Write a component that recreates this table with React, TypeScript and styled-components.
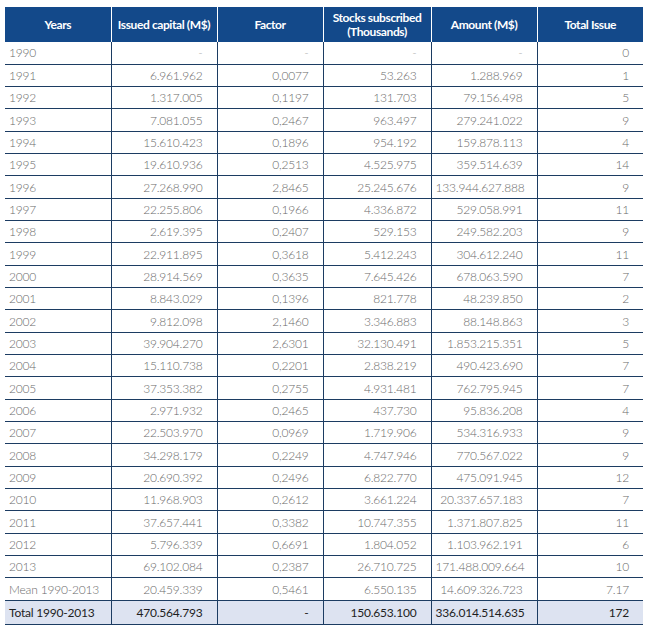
import React from 'react'
import styled, { createGlobalStyle } from 'styled-components'

const GlobalStyle = createGlobalStyle`
  body {
    margin: 0;
    background: #fff;
    font-family: Lato, "Open Sans", sans-serif;
  }
`

type Row = [string, string, string, string, string, string]

const rows: Row[] = [
  ['1990', '-', '-', '-', '-', '0'],
  ['1991', '6.961.962', '0,0077', '53.263', '1.288.969', '1'],
  ['1992', '1.317.005', '0,1197', '131.703', '79.156.498', '5'],
  ['1993', '7.081.055', '0,2467', '963.497', '279.241.022', '9'],
  ['1994', '15.610.423', '0,1896', '954.192', '159.878.113', '4'],
  ['1995', '19.610.936', '0,2513', '4.525.975', '359.514.639', '14'],
  ['1996', '27.268.990', '2,8465', '25.245.676', '133.944.627.888', '9'],
  ['1997', '22.255.806', '0,1966', '4.336.872', '529.058.991', '11'],
  ['1998', '2.619.395', '0,2407', '529.153', '249.582.203', '9'],
  ['1999', '22.911.895', '0,3618', '5.412.243', '304.612.240', '11'],
  ['2000', '28.914.569', '0,3635', '7.645.426', '678.063.590', '7'],
  ['2001', '8.843.029', '0,1396', '821.778', '48.239.850', '2'],
  ['2002', '9.812.098', '2,1460', '3.346.883', '88.148.863', '3'],
  ['2003', '39.904.270', '2,6301', '32.130.491', '1.853.215.351', '5'],
  ['2004', '15.110.738', '0,2201', '2.838.219', '490.423.690', '7'],
  ['2005', '37.353.382', '0,2755', '4.931.481', '762.795.945', '7'],
  ['2006', '2.971.932', '0,2465', '437.730', '95.836.208', '4'],
  ['2007', '22.503.970', '0,0969', '1.719.906', '534.316.933', '9'],
  ['2008', '34.298.179', '0,2249', '4.747.946', '770.567.022', '9'],
  ['2009', '20.690.392', '0,2496', '6.822.770', '475.091.945', '12'],
  ['2010', '11.968.903', '0,2612', '3.661.224', '20.337.657.183', '7'],
  ['2011', '37.657.441', '0,3382', '10.747.355', '1.371.807.825', '11'],
  ['2012', '5.796.339', '0,6691', '1.804.052', '1.103.962.191', '6'],
  ['2013', '69.102.084', '0,2387', '26.710.725', '171.488.009.664', '10'],
  ['Mean 1990-2013', '20.459.339', '0,5461', '6.550.135', '14.609.326.723', '7.17'],
]

const total: Row = ['Total 1990-2013', '470.564.793', '-', '150.653.100', '336.014.514.635', '172']

const widths = [106, 106, 106, 108, 106, 106]

function App() {
  return (
    <>
      <GlobalStyle />
      <Page>
        <Table>
          <colgroup>
            {widths.map((w, i) => (
              <col key={i} style={{ width: w }} />
            ))}
          </colgroup>
          <thead>
            <tr>
              <Th>Years</Th>
              <Th>Issued capital (M$)</Th>
              <Th>Factor</Th>
              <Th>
                Stocks subscribed
                <br />
                (Thousands)
              </Th>
              <Th>Amount (M$)</Th>
              <Th $last>Total Issue</Th>
            </tr>
          </thead>
          <tbody>
            {rows.map((r) => (
              <BodyRow key={r[0]}>
                {r.map((c, i) => (
                  <Td key={i} $left={i === 0} $dash={c === '-'}>
                    {c}
                  </Td>
                ))}
              </BodyRow>
            ))}
            <TotalRow>
              {total.map((c, i) => (
                <Td key={i} $left={i === 0} $total>
                  {c}
                </Td>
              ))}
            </TotalRow>
          </tbody>
        </Table>
      </Page>
    </>
  )
}

export default App

const Page = styled.div`
  padding: 7px 5px;
`

const Table = styled.table`
  width: 638px;
  table-layout: fixed;
  border-collapse: collapse;
  border-spacing: 0;
`

const Th = styled.th<{ $last?: boolean }>`
  height: 35px;
  padding: 0 2px;
  background: #13498a;
  color: #fff;
  font-family: Lato, "Open Sans", sans-serif;
  font-weight: 700;
  font-size: 12px;
  line-height: 14px;
  letter-spacing: -0.4px;
  white-space: nowrap;
  text-align: center;
  vertical-align: middle;
  border-right: ${(p) => (p.$last ? 'none' : '1px solid #fff')};
  box-sizing: border-box;
`

const BodyRow = styled.tr`
  height: 22.33px;
`

const TotalRow = styled.tr`
  height: 24px;
  background: #dde3f1;
`

const Td = styled.td<{ $left?: boolean; $dash?: boolean; $total?: boolean }>`
  padding: 0 ${(p) => (p.$left ? '4px' : '14px')} 0 4px;
  text-align: ${(p) => (p.$left ? 'left' : 'right')};
  font-family: Lato, "Open Sans", sans-serif;
  font-size: 12px;
  font-weight: ${(p) => (p.$total ? 400 : 300)};
  color: ${(p) => (p.$total ? '#1e1e1e' : p.$dash ? '#aaa' : '#6a6a6a')};
  letter-spacing: -0.2px;
  white-space: nowrap;
  border-bottom: 1.5px solid #1c3c62;
  border-left: 1px solid #1c3c62;
  &:first-child {
    border-left: none;
  }
`
